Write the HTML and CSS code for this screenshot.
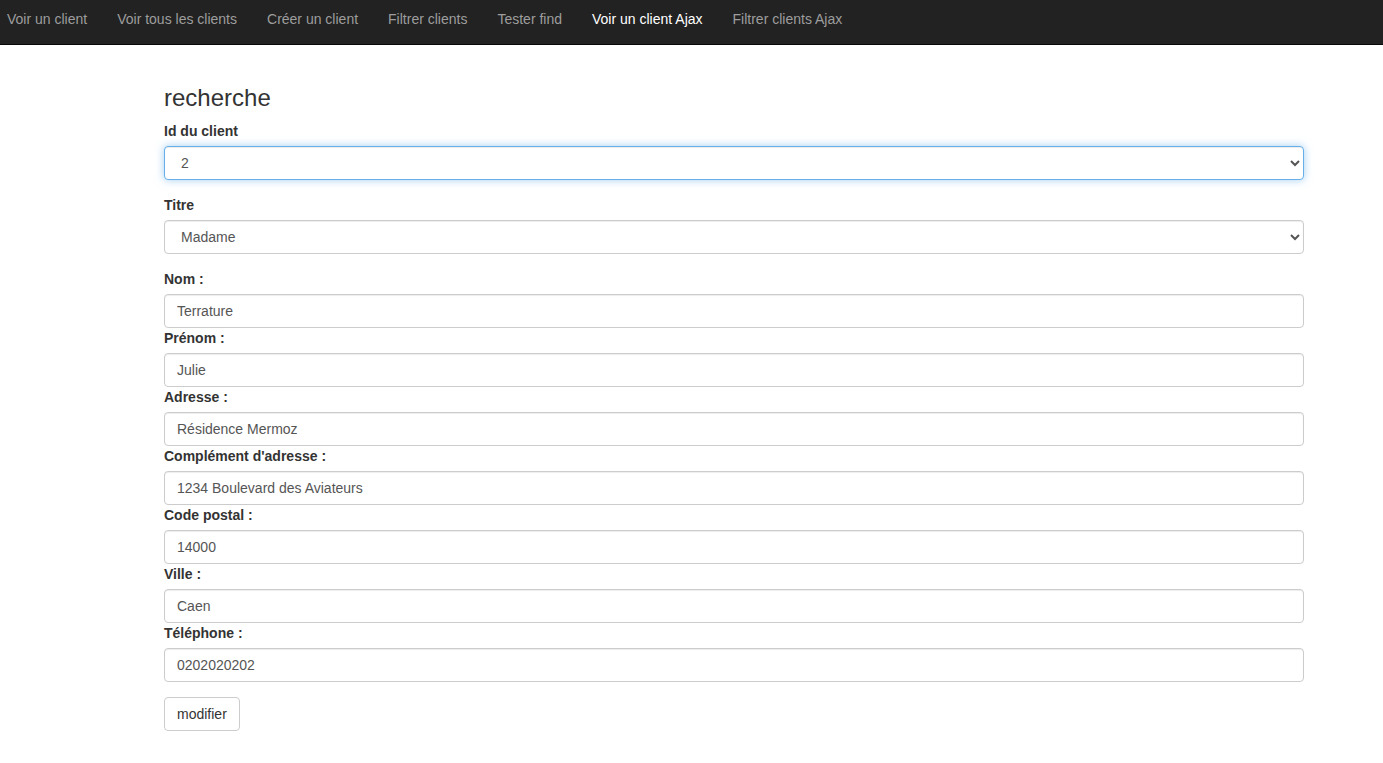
FILE: index.html
```html
<!DOCTYPE html>
<html lang="fr">
<head>
<meta charset="utf-8">
<title>Voir un client Ajax</title>
<link rel="stylesheet" href="styles.css">
</head>
<body>
<nav class="navbar">
  <ul class="nav">
    <li><a href="#">Voir un client</a></li>
    <li><a href="#">Voir tous les clients</a></li>
    <li><a href="#">Créer un client</a></li>
    <li><a href="#">Filtrer clients</a></li>
    <li><a href="#">Tester find</a></li>
    <li class="active"><a href="#">Voir un client Ajax</a></li>
    <li><a href="#">Filtrer clients Ajax</a></li>
  </ul>
</nav>
<main class="container">
  <h3 class="title">recherche</h3>
  <form class="form">
    <div class="form-group">
      <label for="id">Id du client</label>
      <select id="id" class="form-control focused">
        <option>1</option>
        <option selected>2</option>
        <option>3</option>
      </select>
    </div>
    <div class="form-group">
      <label for="titre">Titre</label>
      <select id="titre" class="form-control">
        <option>Monsieur</option>
        <option selected>Madame</option>
      </select>
    </div>
    <div class="field">
      <label for="nom">Nom :</label>
      <input id="nom" class="form-control" type="text" value="Terrature">
    </div>
    <div class="field">
      <label for="prenom">Prénom :</label>
      <input id="prenom" class="form-control" type="text" value="Julie">
    </div>
    <div class="field">
      <label for="adresse">Adresse :</label>
      <input id="adresse" class="form-control" type="text" value="Résidence Mermoz">
    </div>
    <div class="field">
      <label for="complement">Complément d'adresse :</label>
      <input id="complement" class="form-control" type="text" value="1234 Boulevard des Aviateurs">
    </div>
    <div class="field">
      <label for="cp">Code postal :</label>
      <input id="cp" class="form-control" type="text" value="14000">
    </div>
    <div class="field">
      <label for="ville">Ville :</label>
      <input id="ville" class="form-control" type="text" value="Caen">
    </div>
    <div class="field">
      <label for="tel">Téléphone :</label>
      <input id="tel" class="form-control" type="text" value="0202020202">
    </div>
    <div class="actions">
      <button type="button" class="btn">modifier</button>
    </div>
  </form>
</main>
</body>
</html>
```
FILE: styles.css
```css
* { box-sizing: border-box; }
html, body { margin: 0; padding: 0; }
body {
  font-family: "Liberation Sans", Arial, Helvetica, sans-serif;
  font-size: 14px;
  line-height: 20px;
  color: #333;
  background: #fff;
}
.navbar {
  background: #222;
  border-bottom: 1px solid #080808;
  height: 45px;
  margin-bottom: 20px;
}
.nav {
  list-style: none;
  margin: 0;
  padding: 0 0 0 0;
  display: flex;
  margin-left: -8px;
}
.nav a {
  display: block;
  padding: 9px 15px 15px;
  color: #9d9d9d;
  text-decoration: none;
  line-height: 20px;
}
.nav .active a { color: #fff; }
.container {
  padding: 20px 79px 0 164px;
}
.title {
  font-size: 24px;
  font-weight: 500;
  line-height: 26.4px;
  margin: 0 0 10px;
  color: #333;
}
label {
  display: inline-block;
  font-weight: bold;
  margin-bottom: 5px;
  line-height: 20px;
}
.form-group { margin-bottom: 15px; }
.form-control {
  display: block;
  width: 100%;
  height: 34px;
  padding: 6px 12px;
  font-family: inherit;
  font-size: 14px;
  line-height: 20px;
  color: #555;
  background: #fff;
  border: 1px solid #ccc;
  border-radius: 4px;
  box-shadow: inset 0 1px 1px rgba(0,0,0,.075);
  margin: 0;
}
select.form-control { padding: 6px 12px; }
.form-control.focused {
  border-color: #66afe9;
  outline: 0;
  box-shadow: inset 0 1px 1px rgba(0,0,0,.075), 0 0 8px rgba(102,175,233,.6);
}
.actions { margin-top: 15px; }
.btn {
  display: inline-block;
  height: 34px;
  padding: 6px 12px;
  font-family: inherit;
  font-size: 14px;
  line-height: 20px;
  color: #333;
  background: #fff;
  border: 1px solid #ccc;
  border-radius: 4px;
  cursor: pointer;
}
```
